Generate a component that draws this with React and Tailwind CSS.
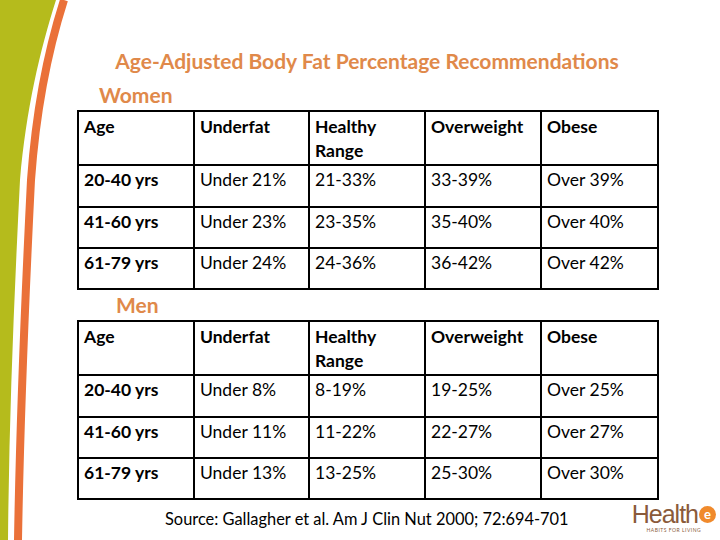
const women = [
  ['20-40 yrs', 'Under 21%', '21-33%', '33-39%', 'Over 39%'],
  ['41-60 yrs', 'Under 23%', '23-35%', '35-40%', 'Over 40%'],
  ['61-79 yrs', 'Under 24%', '24-36%', '36-42%', 'Over 42%'],
]

const men = [
  ['20-40 yrs', 'Under 8%', '8-19%', '19-25%', 'Over 25%'],
  ['41-60 yrs', 'Under 11%', '11-22%', '22-27%', 'Over 27%'],
  ['61-79 yrs', 'Under 13%', '13-25%', '25-30%', 'Over 30%'],
]

function FatTable({ rows }) {
  return (
    <table className="border-collapse border-2 border-black text-[17.5px] leading-[24px] text-black table-fixed w-[580px]">
      <colgroup>
        <col className="w-[116px]" />
        <col className="w-[115px]" />
        <col className="w-[116px]" />
        <col className="w-[116px]" />
        <col className="w-[117px]" />
      </colgroup>
      <tbody>
        <tr className="h-[54px]">
          <th className="border-2 border-black align-top text-left font-bold px-[5px] pt-[3px]">Age</th>
          <th className="border-2 border-black align-top text-left font-bold px-[5px] pt-[3px]">Underfat</th>
          <th className="border-2 border-black align-top text-left font-bold px-[5px] pt-[3px]">Healthy<br />Range</th>
          <th className="border-2 border-black align-top text-left font-bold px-[5px] pt-[3px]">Overweight</th>
          <th className="border-2 border-black align-top text-left font-bold px-[5px] pt-[3px]">Obese</th>
        </tr>
        {rows.map((r, i) => (
          <tr key={i} className={i === 0 ? 'h-[42px]' : 'h-[41px]'}>
            {r.map((c, j) => (
              <td
                key={j}
                className={`border-2 border-black align-top px-[5px] pt-[2px] ${j === 0 ? 'font-bold' : 'font-normal'}`}
              >
                {c}
              </td>
            ))}
          </tr>
        ))}
      </tbody>
    </table>
  )
}

export default function App() {
  return (
    <div className="relative w-[720px] h-[540px] bg-white overflow-hidden font-['Lato','Noto_Sans',sans-serif]">
      {/* left swoosh */}
      <svg className="absolute left-0 top-0" width="90" height="540" viewBox="0 0 90 540">
        <path d="M0 0 L56 0 C40 50 26 110 20 180 C14 300 9 420 8 540 L0 540 Z" fill="#b5bb1c" />
        <path d="M64 0 C48 50 36 110 31 180 C25 300 20 420 18 540" stroke="#ea7139" strokeWidth="8" fill="none" />
      </svg>

      <div className="flex flex-col pl-[77px] pt-[48px]">
        <h1 className="w-[580px] text-center text-[21px] leading-[26px] font-bold text-[#e0894a]">
          Age-Adjusted Body Fat Percentage Recommendations
        </h1>
        <div className="ml-[22px] mt-[9px] text-[21px] leading-[24px] font-bold text-[#e0894a]">Women</div>
        <div className="mt-[3px]">
          <FatTable rows={women} />
        </div>
        <div className="ml-[39px] mt-[3px] text-[21px] leading-[24px] font-bold text-[#e0894a]">Men</div>
        <div className="mt-[3px]">
          <FatTable rows={men} />
        </div>
        <div className="flex items-start">
          <p className="ml-[88px] mt-[7px] text-[16.4px] leading-[24px] text-black">
            Source: Gallagher et al. Am J Clin Nut 2000; 72:694-701
          </p>
          <div className="ml-auto mr-[4px] mt-[3px] flex flex-col items-center">
            <div className="flex items-center h-[22px]">
              <span className="text-[25px] leading-[22px] text-[#8a5a3a] tracking-[-1px] font-['Liberation_Sans_Narrow','Liberation_Sans',sans-serif]">Health</span>
              <span className="ml-[1px] flex h-[17px] w-[17px] items-center justify-center rounded-full bg-[#f08a2c] text-[13px] leading-none font-bold text-white">e</span>
            </div>
            <span className="mt-[2px] text-[5px] leading-[6px] text-[#8a5a3a] tracking-[0.5px]">HABITS FOR LIVING</span>
          </div>
        </div>
      </div>
    </div>
  )
}
